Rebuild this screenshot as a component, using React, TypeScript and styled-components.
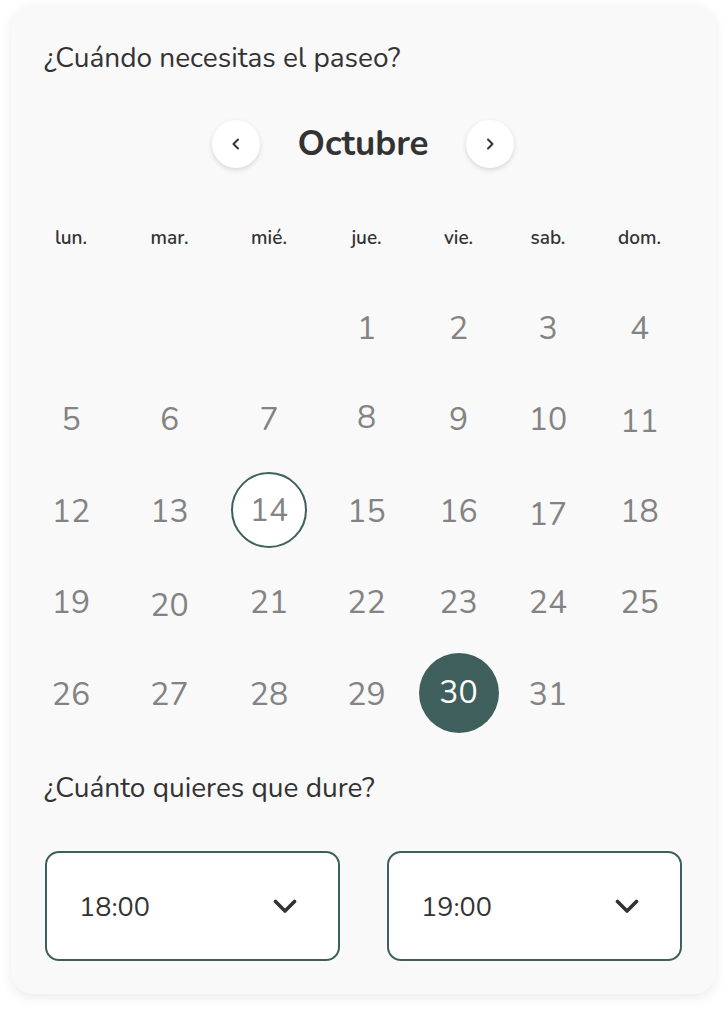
import styled, { createGlobalStyle } from 'styled-components'

const GlobalStyle = createGlobalStyle`
  html, body {
    margin: 0;
    padding: 0;
    background: #ffffff;
  }
  body {
    font-family: 'Nunito', 'Noto Sans', 'Open Sans', sans-serif;
    color: #333333;
  }
`

const Page = styled.div`
  padding: 4px 12px 20px 11px;
`

const Card = styled.section`
  background: #f9f9f9;
  border-radius: 22px;
  box-shadow: 0 4px 12px rgba(0, 0, 0, 0.08);
  padding: 37px 34px 33px 33px;
  display: flex;
  flex-direction: column;
`

const Question = styled.h2<{ $gap?: number; $top?: number }>`
  margin: ${(p) => p.$top ?? 0}px 0 ${(p) => p.$gap ?? 0}px;
  font-size: 28px;
  line-height: 34px;
  font-weight: 400;
  color: #333333;
`

const MonthBar = styled.div`
  display: flex;
  align-items: center;
  justify-content: center;
  margin-bottom: 60px;
`

const NavButton = styled.button`
  width: 48px;
  height: 48px;
  border-radius: 50%;
  border: none;
  background: #ffffff;
  box-shadow: 0 2px 5px rgba(0, 0, 0, 0.14);
  display: flex;
  align-items: center;
  justify-content: center;
  padding: 0;
  cursor: pointer;
`

const MonthName = styled.h1`
  width: 206px;
  margin: 0;
  text-align: center;
  font-size: 35px;
  line-height: 44px;
  font-weight: 700;
  color: #333333;
`

const Grid = styled.div`
  display: grid;
  grid-template-columns: 98px 99px 100px 95px 89px 90px 93px;
  margin-left: -22px;
`

const WeekDay = styled.div`
  text-align: center;
  font-size: 19px;
  line-height: 20px;
  font-weight: 600;
  color: #333333;
  margin-bottom: 33px;
`

const DayCell = styled.div`
  height: 91.5px;
  display: flex;
  align-items: center;
  justify-content: center;
`

const DayNumber = styled.span<{ $shift?: number; $state?: 'today' | 'selected' }>`
  display: flex;
  align-items: center;
  justify-content: center;
  font-size: 32px;
  line-height: 1;
  color: ${(p) => (p.$state === 'selected' ? '#ffffff' : '#838383')};
  transform: translateY(${(p) => (p.$state ? 0 : 2 + (p.$shift ?? 0))}px);
  box-sizing: border-box;
  ${(p) =>
    p.$state === 'today' &&
    `
    width: 76px;
    height: 76px;
    padding-top: 3px;
    border-radius: 50%;
    border: 2px solid #3d605d;
    background: #ffffff;
  `}
  ${(p) =>
    p.$state === 'selected' &&
    `
    width: 80px;
    height: 80px;
    padding-top: 1px;
    border-radius: 50%;
    background: #3f5f5c;
  `}
`

const TimeRow = styled.div`
  display: grid;
  grid-template-columns: 295px 295px;
  justify-content: space-between;
  padding-left: 1px;
`

const TimeSelect = styled.div`
  height: 110px;
  box-sizing: border-box;
  border: 2px solid #3d605d;
  border-radius: 14px;
  background: #ffffff;
  display: flex;
  align-items: center;
  justify-content: space-between;
  padding: 0 41px 0 32px;
  font-size: 27px;
  color: #333333;
`

const TimeValue = styled.span`
  padding-top: 4px;
`

const Chevron = ({ dir }: { dir: 'left' | 'right' }) => (
  <svg width="14" height="14" viewBox="0 0 14 14" fill="none">
    <path
      d={dir === 'left' ? 'M9 2.5L4.5 7L9 11.5' : 'M5 2.5L9.5 7L5 11.5'}
      stroke="#333"
      strokeWidth="2"
      strokeLinecap="round"
      strokeLinejoin="round"
    />
  </svg>
)

const ChevronDown = () => (
  <svg width="24" height="16" viewBox="0 0 24 16" fill="none">
    <path d="M2.5 3.5L12 13L21.5 3.5" stroke="#333" strokeWidth="3.6" strokeLinecap="round" strokeLinejoin="round" />
  </svg>
)

const weekDays = ['lun.', 'mar.', 'mié.', 'jue.', 'vie.', 'sab.', 'dom.']

// small per-day nudges seen in the design
const shifts: Record<number, number> = { 8: -2, 11: 2, 17: 3, 20: 3 }

const firstOffset = 3
const daysInMonth = 31
const today = 14
const selected = 30

export default function App() {
  const cells: (number | null)[] = []
  for (let i = 0; i < firstOffset; i++) cells.push(null)
  for (let d = 1; d <= daysInMonth; d++) cells.push(d)

  return (
    <Page>
      <GlobalStyle />
      <Card>
        <Question $gap={45}>¿Cuándo necesitas el paseo?</Question>

        <MonthBar>
          <NavButton aria-label="Mes anterior">
            <Chevron dir="left" />
          </NavButton>
          <MonthName>Octubre</MonthName>
          <NavButton aria-label="Mes siguiente">
            <Chevron dir="right" />
          </NavButton>
        </MonthBar>

        <Grid>
          {weekDays.map((w) => (
            <WeekDay key={w}>{w}</WeekDay>
          ))}
          {cells.map((d, i) => (
            <DayCell key={i}>
              {d !== null && (
                <DayNumber
                  $shift={shifts[d]}
                  $state={d === today ? 'today' : d === selected ? 'selected' : undefined}
                >
                  {d}
                </DayNumber>
              )}
            </DayCell>
          ))}
        </Grid>

        <Question $top={32} $gap={46}>
          ¿Cuánto quieres que dure?
        </Question>

        <TimeRow>
          <TimeSelect>
            <TimeValue>18:00</TimeValue>
            <ChevronDown />
          </TimeSelect>
          <TimeSelect>
            <TimeValue>19:00</TimeValue>
            <ChevronDown />
          </TimeSelect>
        </TimeRow>
      </Card>
    </Page>
  )
}
